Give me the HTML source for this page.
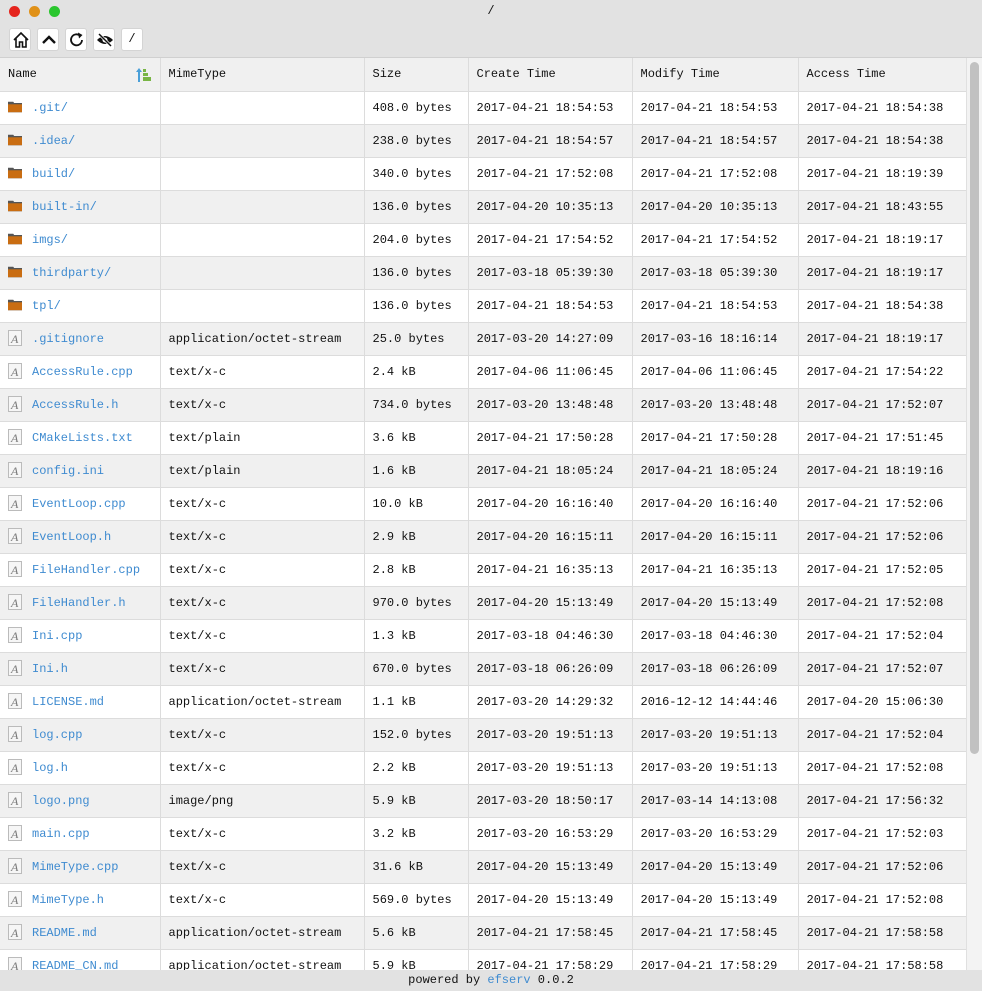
<!DOCTYPE html>
<html><head><meta charset="utf-8"><style>
*{margin:0;padding:0;box-sizing:border-box}
body{width:982px;height:991px;overflow:hidden;background:#e4e4e4;font-family:"Liberation Mono","DejaVu Sans Mono",monospace;font-size:12px;color:#111;position:relative}
.tb{position:absolute;left:0;top:0;width:982px;height:58px;background:#e2e2e2;border-bottom:1px solid #d0d0d0}
.dot{position:absolute;top:6px;width:11px;height:11px;border-radius:50%}
.title{position:absolute;left:0;width:982px;top:4px;text-align:center;font-size:12px}
.btn{position:absolute;top:28px;width:22px;height:23px;background:#fff;border-radius:3px;border:1px solid #d4d4d4}
.btn svg{position:absolute;left:2px;top:2px}
.grid{position:absolute;left:0;top:58px;width:966px;height:912px;overflow:hidden;background:#fff}
table{border-collapse:collapse;table-layout:fixed;width:966px}
td,th{height:33px;border-right:1px solid #dcdcdc;border-bottom:1px solid #dcdcdc;padding:0 0 0 8px;text-align:left;font-weight:normal;white-space:nowrap;overflow:hidden}
th{background:#f0f0f0;position:relative}
tr:nth-child(odd) td{background:#f0f0f0}
a{color:#3f8bd0;text-decoration:none}
.ic{display:inline-block;vertical-align:middle;margin-right:10px;position:relative;top:-1px}
.sb{position:absolute;left:966px;top:58px;width:16px;height:912px;background:#f3f3f3;border-left:1px solid #e0e0e0}
.th{position:absolute;left:3px;top:4px;width:9px;height:692px;background:#c1c1c1;border-radius:5px}
.ft{position:absolute;left:0;top:970px;width:982px;height:21px;background:#e2e2e2;text-align:center;line-height:20px}
</style></head><body>
<div class="tb">
<div class="dot" style="left:9px;background:#e5241d"></div>
<div class="dot" style="left:29px;background:#e09118"></div>
<div class="dot" style="left:49px;background:#2ac62e"></div>
<div class="title">/</div>
<div class="btn" style="left:9px"><svg width="18" height="18" viewBox="0 0 18 18"><path d="M2 9 L9 2 L16 9 M4 7 V16 H7.5 V11 H10.5 V16 H14 V7" fill="none" stroke="#111" stroke-width="1.6"/></svg></div>
<div class="btn" style="left:37px"><svg width="18" height="18" viewBox="0 0 18 18"><path d="M3 12 L9 6 L15 12" fill="none" stroke="#111" stroke-width="2.4"/></svg></div>
<div class="btn" style="left:65px"><svg width="18" height="18" viewBox="0 0 18 18"><path d="M14 9 A5.5 5.5 0 1 1 11.5 4.2" fill="none" stroke="#111" stroke-width="1.8"/><path d="M10 1.5 L14.5 4 L11 7.5 Z" fill="#111"/></svg></div>
<div class="btn" style="left:93px"><svg width="18" height="18" viewBox="0 0 18 18"><path d="M1 9 Q9 1 17 9 Q9 17 1 9Z" fill="#111"/><circle cx="9" cy="9" r="2.5" fill="#fff"/><path d="M3 3 L15 15" stroke="#fff" stroke-width="3"/><path d="M3 3 L15 15" stroke="#111" stroke-width="1.5"/></svg></div>
<div class="btn" style="left:121px;font-size:12px;text-align:center;line-height:21px">/</div>
</div>
<div class="grid"><table>
<colgroup><col style="width:160px"><col style="width:204px"><col style="width:104px"><col style="width:164px"><col style="width:166px"><col style="width:168px"></colgroup>
<tr><th>Name<svg style="position:absolute;left:136px;top:8px" width="16" height="17" viewBox="0 0 16 17"><path d="M3 2 L6 6 H4 V16 H2 V6 H0Z" fill="#4a9fd8"/><rect x="7" y="3" width="3" height="3" fill="#78b544"/><rect x="7" y="7" width="5" height="3" fill="#78b544"/><rect x="7" y="11" width="8" height="4" fill="#78b544"/></svg></th><th>MimeType</th><th>Size</th><th>Create Time</th><th>Modify Time</th><th>Access Time</th></tr>
<tr><td><svg class="ic" width="14" height="13" viewBox="0 0 16 13"><path d="M0 1 H6 L7 2.5 H16 V13 H0Z" fill="#555"/><rect x="0" y="4" width="16" height="9" fill="#c96d12"/></svg><a>.git/</a></td><td></td><td>408.0 bytes</td><td>2017-04-21 18:54:53</td><td>2017-04-21 18:54:53</td><td>2017-04-21 18:54:38</td></tr>
<tr><td><svg class="ic" width="14" height="13" viewBox="0 0 16 13"><path d="M0 1 H6 L7 2.5 H16 V13 H0Z" fill="#555"/><rect x="0" y="4" width="16" height="9" fill="#c96d12"/></svg><a>.idea/</a></td><td></td><td>238.0 bytes</td><td>2017-04-21 18:54:57</td><td>2017-04-21 18:54:57</td><td>2017-04-21 18:54:38</td></tr>
<tr><td><svg class="ic" width="14" height="13" viewBox="0 0 16 13"><path d="M0 1 H6 L7 2.5 H16 V13 H0Z" fill="#555"/><rect x="0" y="4" width="16" height="9" fill="#c96d12"/></svg><a>build/</a></td><td></td><td>340.0 bytes</td><td>2017-04-21 17:52:08</td><td>2017-04-21 17:52:08</td><td>2017-04-21 18:19:39</td></tr>
<tr><td><svg class="ic" width="14" height="13" viewBox="0 0 16 13"><path d="M0 1 H6 L7 2.5 H16 V13 H0Z" fill="#555"/><rect x="0" y="4" width="16" height="9" fill="#c96d12"/></svg><a>built-in/</a></td><td></td><td>136.0 bytes</td><td>2017-04-20 10:35:13</td><td>2017-04-20 10:35:13</td><td>2017-04-21 18:43:55</td></tr>
<tr><td><svg class="ic" width="14" height="13" viewBox="0 0 16 13"><path d="M0 1 H6 L7 2.5 H16 V13 H0Z" fill="#555"/><rect x="0" y="4" width="16" height="9" fill="#c96d12"/></svg><a>imgs/</a></td><td></td><td>204.0 bytes</td><td>2017-04-21 17:54:52</td><td>2017-04-21 17:54:52</td><td>2017-04-21 18:19:17</td></tr>
<tr><td><svg class="ic" width="14" height="13" viewBox="0 0 16 13"><path d="M0 1 H6 L7 2.5 H16 V13 H0Z" fill="#555"/><rect x="0" y="4" width="16" height="9" fill="#c96d12"/></svg><a>thirdparty/</a></td><td></td><td>136.0 bytes</td><td>2017-03-18 05:39:30</td><td>2017-03-18 05:39:30</td><td>2017-04-21 18:19:17</td></tr>
<tr><td><svg class="ic" width="14" height="13" viewBox="0 0 16 13"><path d="M0 1 H6 L7 2.5 H16 V13 H0Z" fill="#555"/><rect x="0" y="4" width="16" height="9" fill="#c96d12"/></svg><a>tpl/</a></td><td></td><td>136.0 bytes</td><td>2017-04-21 18:54:53</td><td>2017-04-21 18:54:53</td><td>2017-04-21 18:54:38</td></tr>
<tr><td><svg class="ic" width="14" height="16" viewBox="0 0 14 16"><rect x="0.5" y="0.5" width="13" height="15" fill="#f6f6f6" stroke="#bbb"/><text x="3" y="13" font-family="Liberation Serif" font-style="italic" font-size="12" fill="#777">A</text></svg><a>.gitignore</a></td><td>application/octet-stream</td><td>25.0 bytes</td><td>2017-03-20 14:27:09</td><td>2017-03-16 18:16:14</td><td>2017-04-21 18:19:17</td></tr>
<tr><td><svg class="ic" width="14" height="16" viewBox="0 0 14 16"><rect x="0.5" y="0.5" width="13" height="15" fill="#f6f6f6" stroke="#bbb"/><text x="3" y="13" font-family="Liberation Serif" font-style="italic" font-size="12" fill="#777">A</text></svg><a>AccessRule.cpp</a></td><td>text/x-c</td><td>2.4 kB</td><td>2017-04-06 11:06:45</td><td>2017-04-06 11:06:45</td><td>2017-04-21 17:54:22</td></tr>
<tr><td><svg class="ic" width="14" height="16" viewBox="0 0 14 16"><rect x="0.5" y="0.5" width="13" height="15" fill="#f6f6f6" stroke="#bbb"/><text x="3" y="13" font-family="Liberation Serif" font-style="italic" font-size="12" fill="#777">A</text></svg><a>AccessRule.h</a></td><td>text/x-c</td><td>734.0 bytes</td><td>2017-03-20 13:48:48</td><td>2017-03-20 13:48:48</td><td>2017-04-21 17:52:07</td></tr>
<tr><td><svg class="ic" width="14" height="16" viewBox="0 0 14 16"><rect x="0.5" y="0.5" width="13" height="15" fill="#f6f6f6" stroke="#bbb"/><text x="3" y="13" font-family="Liberation Serif" font-style="italic" font-size="12" fill="#777">A</text></svg><a>CMakeLists.txt</a></td><td>text/plain</td><td>3.6 kB</td><td>2017-04-21 17:50:28</td><td>2017-04-21 17:50:28</td><td>2017-04-21 17:51:45</td></tr>
<tr><td><svg class="ic" width="14" height="16" viewBox="0 0 14 16"><rect x="0.5" y="0.5" width="13" height="15" fill="#f6f6f6" stroke="#bbb"/><text x="3" y="13" font-family="Liberation Serif" font-style="italic" font-size="12" fill="#777">A</text></svg><a>config.ini</a></td><td>text/plain</td><td>1.6 kB</td><td>2017-04-21 18:05:24</td><td>2017-04-21 18:05:24</td><td>2017-04-21 18:19:16</td></tr>
<tr><td><svg class="ic" width="14" height="16" viewBox="0 0 14 16"><rect x="0.5" y="0.5" width="13" height="15" fill="#f6f6f6" stroke="#bbb"/><text x="3" y="13" font-family="Liberation Serif" font-style="italic" font-size="12" fill="#777">A</text></svg><a>EventLoop.cpp</a></td><td>text/x-c</td><td>10.0 kB</td><td>2017-04-20 16:16:40</td><td>2017-04-20 16:16:40</td><td>2017-04-21 17:52:06</td></tr>
<tr><td><svg class="ic" width="14" height="16" viewBox="0 0 14 16"><rect x="0.5" y="0.5" width="13" height="15" fill="#f6f6f6" stroke="#bbb"/><text x="3" y="13" font-family="Liberation Serif" font-style="italic" font-size="12" fill="#777">A</text></svg><a>EventLoop.h</a></td><td>text/x-c</td><td>2.9 kB</td><td>2017-04-20 16:15:11</td><td>2017-04-20 16:15:11</td><td>2017-04-21 17:52:06</td></tr>
<tr><td><svg class="ic" width="14" height="16" viewBox="0 0 14 16"><rect x="0.5" y="0.5" width="13" height="15" fill="#f6f6f6" stroke="#bbb"/><text x="3" y="13" font-family="Liberation Serif" font-style="italic" font-size="12" fill="#777">A</text></svg><a>FileHandler.cpp</a></td><td>text/x-c</td><td>2.8 kB</td><td>2017-04-21 16:35:13</td><td>2017-04-21 16:35:13</td><td>2017-04-21 17:52:05</td></tr>
<tr><td><svg class="ic" width="14" height="16" viewBox="0 0 14 16"><rect x="0.5" y="0.5" width="13" height="15" fill="#f6f6f6" stroke="#bbb"/><text x="3" y="13" font-family="Liberation Serif" font-style="italic" font-size="12" fill="#777">A</text></svg><a>FileHandler.h</a></td><td>text/x-c</td><td>970.0 bytes</td><td>2017-04-20 15:13:49</td><td>2017-04-20 15:13:49</td><td>2017-04-21 17:52:08</td></tr>
<tr><td><svg class="ic" width="14" height="16" viewBox="0 0 14 16"><rect x="0.5" y="0.5" width="13" height="15" fill="#f6f6f6" stroke="#bbb"/><text x="3" y="13" font-family="Liberation Serif" font-style="italic" font-size="12" fill="#777">A</text></svg><a>Ini.cpp</a></td><td>text/x-c</td><td>1.3 kB</td><td>2017-03-18 04:46:30</td><td>2017-03-18 04:46:30</td><td>2017-04-21 17:52:04</td></tr>
<tr><td><svg class="ic" width="14" height="16" viewBox="0 0 14 16"><rect x="0.5" y="0.5" width="13" height="15" fill="#f6f6f6" stroke="#bbb"/><text x="3" y="13" font-family="Liberation Serif" font-style="italic" font-size="12" fill="#777">A</text></svg><a>Ini.h</a></td><td>text/x-c</td><td>670.0 bytes</td><td>2017-03-18 06:26:09</td><td>2017-03-18 06:26:09</td><td>2017-04-21 17:52:07</td></tr>
<tr><td><svg class="ic" width="14" height="16" viewBox="0 0 14 16"><rect x="0.5" y="0.5" width="13" height="15" fill="#f6f6f6" stroke="#bbb"/><text x="3" y="13" font-family="Liberation Serif" font-style="italic" font-size="12" fill="#777">A</text></svg><a>LICENSE.md</a></td><td>application/octet-stream</td><td>1.1 kB</td><td>2017-03-20 14:29:32</td><td>2016-12-12 14:44:46</td><td>2017-04-20 15:06:30</td></tr>
<tr><td><svg class="ic" width="14" height="16" viewBox="0 0 14 16"><rect x="0.5" y="0.5" width="13" height="15" fill="#f6f6f6" stroke="#bbb"/><text x="3" y="13" font-family="Liberation Serif" font-style="italic" font-size="12" fill="#777">A</text></svg><a>log.cpp</a></td><td>text/x-c</td><td>152.0 bytes</td><td>2017-03-20 19:51:13</td><td>2017-03-20 19:51:13</td><td>2017-04-21 17:52:04</td></tr>
<tr><td><svg class="ic" width="14" height="16" viewBox="0 0 14 16"><rect x="0.5" y="0.5" width="13" height="15" fill="#f6f6f6" stroke="#bbb"/><text x="3" y="13" font-family="Liberation Serif" font-style="italic" font-size="12" fill="#777">A</text></svg><a>log.h</a></td><td>text/x-c</td><td>2.2 kB</td><td>2017-03-20 19:51:13</td><td>2017-03-20 19:51:13</td><td>2017-04-21 17:52:08</td></tr>
<tr><td><svg class="ic" width="14" height="16" viewBox="0 0 14 16"><rect x="0.5" y="0.5" width="13" height="15" fill="#f6f6f6" stroke="#bbb"/><text x="3" y="13" font-family="Liberation Serif" font-style="italic" font-size="12" fill="#777">A</text></svg><a>logo.png</a></td><td>image/png</td><td>5.9 kB</td><td>2017-03-20 18:50:17</td><td>2017-03-14 14:13:08</td><td>2017-04-21 17:56:32</td></tr>
<tr><td><svg class="ic" width="14" height="16" viewBox="0 0 14 16"><rect x="0.5" y="0.5" width="13" height="15" fill="#f6f6f6" stroke="#bbb"/><text x="3" y="13" font-family="Liberation Serif" font-style="italic" font-size="12" fill="#777">A</text></svg><a>main.cpp</a></td><td>text/x-c</td><td>3.2 kB</td><td>2017-03-20 16:53:29</td><td>2017-03-20 16:53:29</td><td>2017-04-21 17:52:03</td></tr>
<tr><td><svg class="ic" width="14" height="16" viewBox="0 0 14 16"><rect x="0.5" y="0.5" width="13" height="15" fill="#f6f6f6" stroke="#bbb"/><text x="3" y="13" font-family="Liberation Serif" font-style="italic" font-size="12" fill="#777">A</text></svg><a>MimeType.cpp</a></td><td>text/x-c</td><td>31.6 kB</td><td>2017-04-20 15:13:49</td><td>2017-04-20 15:13:49</td><td>2017-04-21 17:52:06</td></tr>
<tr><td><svg class="ic" width="14" height="16" viewBox="0 0 14 16"><rect x="0.5" y="0.5" width="13" height="15" fill="#f6f6f6" stroke="#bbb"/><text x="3" y="13" font-family="Liberation Serif" font-style="italic" font-size="12" fill="#777">A</text></svg><a>MimeType.h</a></td><td>text/x-c</td><td>569.0 bytes</td><td>2017-04-20 15:13:49</td><td>2017-04-20 15:13:49</td><td>2017-04-21 17:52:08</td></tr>
<tr><td><svg class="ic" width="14" height="16" viewBox="0 0 14 16"><rect x="0.5" y="0.5" width="13" height="15" fill="#f6f6f6" stroke="#bbb"/><text x="3" y="13" font-family="Liberation Serif" font-style="italic" font-size="12" fill="#777">A</text></svg><a>README.md</a></td><td>application/octet-stream</td><td>5.6 kB</td><td>2017-04-21 17:58:45</td><td>2017-04-21 17:58:45</td><td>2017-04-21 17:58:58</td></tr>
<tr><td><svg class="ic" width="14" height="16" viewBox="0 0 14 16"><rect x="0.5" y="0.5" width="13" height="15" fill="#f6f6f6" stroke="#bbb"/><text x="3" y="13" font-family="Liberation Serif" font-style="italic" font-size="12" fill="#777">A</text></svg><a>README_CN.md</a></td><td>application/octet-stream</td><td>5.9 kB</td><td>2017-04-21 17:58:29</td><td>2017-04-21 17:58:29</td><td>2017-04-21 17:58:58</td></tr>
</table></div>
<div class="sb"><div class="th"></div></div>
<div class="ft">powered by <a>efserv</a> 0.0.2</div>
</body></html>
